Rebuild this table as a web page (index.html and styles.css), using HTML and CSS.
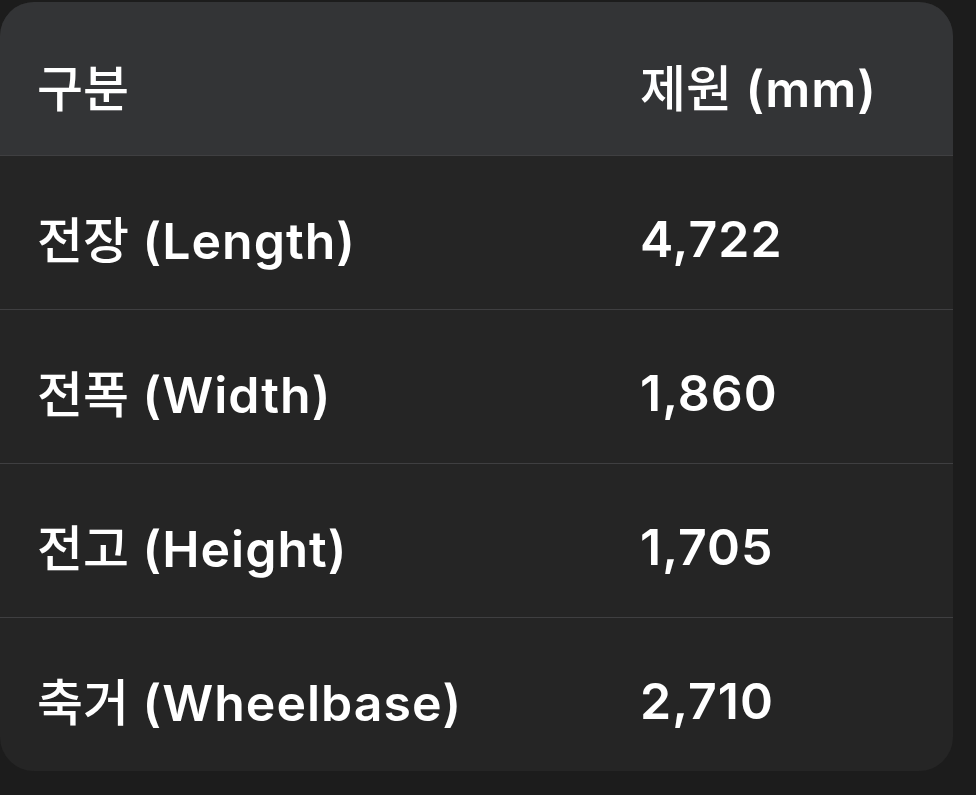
FILE: index.html
```html
<!DOCTYPE html>
<html lang="ko">
<head>
<meta charset="utf-8">
<link rel="stylesheet" href="styles.css">
</head>
<body>
<div class="card">
  <div class="row head">
    <div class="cell"><span class="ko">구분</span></div>
    <div class="cell"><span class="ko">제원</span> (mm)</div>
  </div>
  <div class="row">
    <div class="cell"><span class="ko">전장</span> (Length)</div>
    <div class="cell">4,722</div>
  </div>
  <div class="row">
    <div class="cell"><span class="ko">전폭</span> (Width)</div>
    <div class="cell">1,860</div>
  </div>
  <div class="row">
    <div class="cell"><span class="ko">전고</span> (Height)</div>
    <div class="cell">1,705</div>
  </div>
  <div class="row">
    <div class="cell"><span class="ko">축거</span> (Wheelbase)</div>
    <div class="cell">2,710</div>
  </div>
</div>
</body>
</html>
```
FILE: styles.css
```css
html, body {
  margin: 0;
  padding: 0;
  background: #1c1c1c;
}
body {
  font-family: Inter, "Noto Sans CJK KR", sans-serif;
  color: #ffffff;
  padding-top: 2px;
}
.card {
  width: 953px;
  background: #252525;
  border-radius: 34px;
  overflow: hidden;
}
.row {
  display: grid;
  grid-template-columns: 603px 1fr;
  align-items: center;
  box-sizing: border-box;
  height: 154px;
  padding: 12px 0 0 37px;
  border-top: 1px solid #3f3f41;
  font-size: 50px;
  font-weight: 600;
  line-height: 60px;
  letter-spacing: 1px;
}
.row.head {
  height: 153px;
  border-top: none;
  background: #333436;
  padding-top: 17px;
}
.cell {
  white-space: nowrap;
}
.ko {
  font-family: "Noto Sans CJK KR", sans-serif;
  font-weight: 500;
  letter-spacing: 0;
}
```
